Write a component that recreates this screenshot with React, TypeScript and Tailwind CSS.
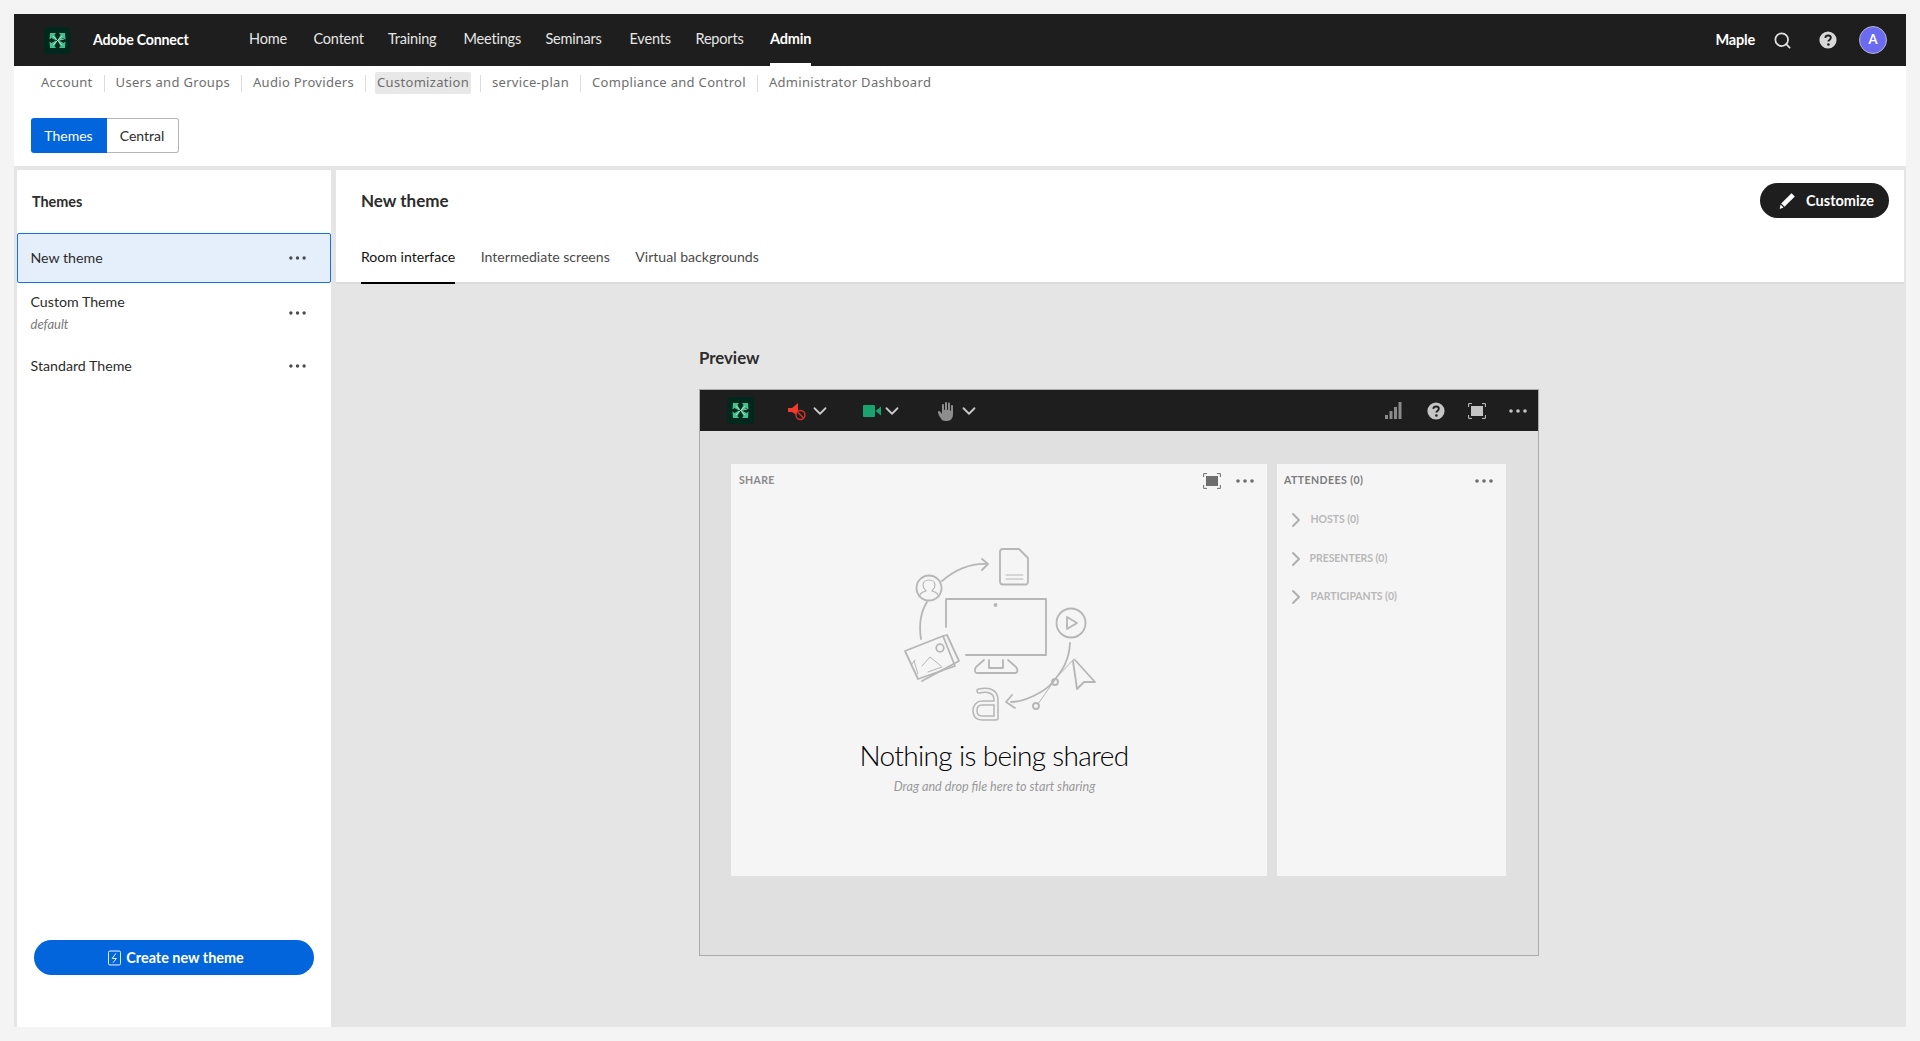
import { Search, ChevronDown, ChevronRight } from 'lucide-react'

const mainNav = [
  { label: 'Home', w: 'w-[64.5px]' },
  { label: 'Content', w: 'w-[74.5px]' },
  { label: 'Training', w: 'w-[75.5px]' },
  { label: 'Meetings', w: 'w-[82px]' },
  { label: 'Seminars', w: 'w-[84px]' },
  { label: 'Events', w: 'w-[66px]' },
  { label: 'Reports', w: 'w-[74.5px]' },
]

const subNav = ['Account', 'Users and Groups', 'Audio Providers', 'Customization', 'service-plan', 'Compliance and Control', 'Administrator Dashboard']

function Dots({ className }: { className: string }) {
  return (
    <svg viewBox="0 0 18 4" className={className} fill="currentColor">
      <circle cx="2" cy="2" r="1.8" />
      <circle cx="9" cy="2" r="1.8" />
      <circle cx="16" cy="2" r="1.8" />
    </svg>
  )
}

function Logo() {
  return (
    <svg viewBox="0 0 27 27" className="w-[27px] h-[27px] shrink-0">
      <rect width="27" height="27" rx="4" fill="#00281c" />
      <g fill="#45c08e">
        <path d="M6 6h6l-1.500 2 2.500 4.500-1 1-4.500-2.500-2 1.500z" />
        <path d="M21 6h-6l1.500 2-2.500 4.500 1 1 4.500-2.500 2 1.500z" />
        <path d="M6 21h6l-1.500-2 2.500-4.500-1-1-4.500 2.500-2-1.500z" />
        <path d="M21 21h-6l1.500-2-2.500-4.500 1-1 4.500 2.500 2-1.500z" />
      </g>
      <path d="M9 9l9 9M18 9l-9 9M13.500 13.500l7-1.500" stroke="#b9e6d3" strokeWidth="0.800" />
    </svg>
  )
}

function HelpIcon({ className, mark }: { className: string; mark: string }) {
  return (
    <svg viewBox="0 0 18 18" className={className}>
      <circle cx="9" cy="9" r="8.600" fill="currentColor" />
      <path d="M6.300 6.800c.2-1.500 1.300-2.300 2.800-2.300 1.600 0 2.700.9 2.700 2.200 0 1.100-.6 1.600-1.400 2.200-.7.500-1 .8-1 1.600" fill="none" stroke={mark} strokeWidth="1.900" />
      <circle cx="9.400" cy="13.400" r="1.250" fill={mark} />
    </svg>
  )
}

function FullScreen({ className, fill }: { className: string; fill: string }) {
  return (
    <svg viewBox="0 0 18 16" className={className} fill="none" stroke="currentColor" strokeWidth="1">
      <path d="M.6 4V.6H4M14 .6h3.400V4M17.400 12v3.400H14M4 15.400H.6V12" />
      <rect x="3" y="3" width="12" height="10" fill={fill} stroke="none" />
    </svg>
  )
}

function SideItem({ name, note, selected }: { name: string; note?: string; selected?: boolean }) {
  const box = selected
    ? 'h-[50px] bg-[#e5effb] border-[1.5px] border-[#1473e6] rounded-[2px]'
    : 'border-[1.5px] border-transparent'
  return (
    <div className={`flex items-center justify-between pl-[12.5px] pr-[24px] text-[#2c2c2c] ${box} ${note ? 'h-[60px]' : ''} ${!selected && !note ? 'h-[46px]' : ''}`}>
      <div className="flex flex-col">
        <span className="text-[14.2px] leading-[20px]">{name}</span>
        {note && <span className="text-[13px] leading-[20px] mt-[2px] italic text-[#7a7a7a]">{note}</span>}
      </div>
      <Dots className="w-[17px] h-[4px] text-[#4b4b4b]" />
    </div>
  )
}

function Illustration() {
  return (
    <svg viewBox="0 0 280 200" className="w-[280px] h-[200px] shrink-0" fill="none" stroke="#b6b6b6" strokeWidth="1.800" strokeLinecap="round" strokeLinejoin="round">
      {/* document */}
      <path d="M143 20h16l9 9v24a2.500 2.500 0 0 1-2.500 2.500h-22.500a3 3 0 0 1-3-3v-29.500a3 3 0 0 1 3-3z" />
      <path d="M146 46h17M146 50h17" strokeWidth="1" />
      {/* arrow to the document */}
      <path d="M82 52c14-12 28-18 46-17M122 30l6 5-6 6" />
      {/* person */}
      <circle cx="69" cy="59" r="12.500" />
      <path d="M59 68c1-4 3-4.500 7-6-2-2-3-4-3-6 0-3 2.500-5 6-5s6 2 6 5c0 2-1 4-3 6 4 1.500 6 2 7 6" strokeWidth="1.200" />
      {/* left arc */}
      <path d="M67 73c-7 11-8 24-6 37" />
      {/* pictures */}
      <path d="M45 122l38-15 12 30-37 13z" />
      <path d="M83 107l4-1 12 26-37 20" />
      <path d="M52 135l3-4m-1 1l4 13M62 137l8-9 11 9M68 143l14-5M70 146l12-4" strokeWidth="1" />
      <circle cx="80" cy="119" r="3.800" />
      {/* monitor */}
      <path d="M86 98V70h100v56H106" />
      <circle cx="135.500" cy="76" r="1" fill="#b6b6b6" />
      <path d="M129 131v8h14v-8M124 131l-8 7c-2 3-1 6 1 6h38c3 0 3-3 1-6l-8-7" />
      {/* play */}
      <circle cx="211" cy="94" r="14.500" />
      <path d="M207 88l10 6-10 6z" />
      {/* curve back */}
      <path d="M210 114c-1 20-10 30-17 39-8 10-29 20-42 20M152 166l-6 7 9 6" />
      <circle cx="195" cy="153" r="3" />
      <circle cx="176" cy="177" r="3" />
      <path d="M192 155l-14 20M195 150l19-20" strokeWidth="1" />
      {/* pointer */}
      <path d="M215 131l20 22-11 0-7 7-4-28" />
      {/* a */}
      <g transform="translate(2 0)">
        <path d="M117 162c9-2 17 0 17 9v18h-14c-5 0-7-3-7-7.500s3-7.500 7-7.500h14" strokeWidth="5.500" />
        <path d="M117 162c9-2 17 0 17 9v18h-14c-5 0-7-3-7-7.500s3-7.500 7-7.500h14" strokeWidth="2.500" stroke="#f4f4f4" />
      </g>
    </svg>
  )
}

export default function App() {
  return (
    <div className="w-[1920px] h-[1041px] bg-[#f4f4f4] px-[14px] pt-[14px] pb-[14px] flex flex-col overflow-hidden font-['Lato','Liberation_Sans',sans-serif]">
      {/* top bar */}
      <header className="h-[52px] bg-[#1e1e1e] flex items-center pl-[30px] pr-[19px] text-white shrink-0">
        <Logo />
        <span className="ml-[22px] w-[156px] pb-[1px] text-[14.2px] font-bold tracking-[-0.2px]">Adobe Connect</span>
        <nav className="flex items-center h-full">
          {mainNav.map(item => (
            <span key={item.label} className={`${item.w} pb-[2px] text-[14.5px] text-[#e6e6e6] tracking-[-0.2px]`}>{item.label}</span>
          ))}
          <span className="h-full w-[41px] flex items-center border-b-[3px] border-white text-[14.5px] font-bold tracking-[-0.2px]">Admin</span>
        </nav>
        <div className="ml-auto flex items-center">
          <span className="text-[14.5px] font-bold tracking-[-0.2px]">Maple</span>
          <Search className="ml-[18px] w-[19px] h-[19px] text-[#e0e0e0]" strokeWidth={2.200} />
          <HelpIcon className="ml-[27px] w-[18px] h-[18px] text-[#d8d8d8]" mark="#1e1e1e" />
          <div className="ml-[22px] w-[28px] h-[28px] rounded-full bg-[#6b6bf2] border border-[#b5b5c8] flex items-center justify-center text-[13px] font-bold">A</div>
        </div>
      </header>

      {/* sub nav and toggle */}
      <div className="h-[100px] bg-white shrink-0 pl-[16.500px]">
        <div className="flex items-center pt-[6px] pl-[10.500px] h-[28px] text-[13px] text-[#6e6e6e] font-['Noto_Sans',sans-serif] tracking-[0.31px]">
          {subNav.map((label, i) => (
            <div key={label} className="flex items-center">
              {i > 0 && <span className="w-px h-[17px] bg-[#dcdcdc] mx-[11px]" />}
              <span className={label === 'Customization' ? 'bg-[#e8e8e8] px-[2px] py-[1px] rounded-[2px] -mx-[2px]' : ''}>{label}</span>
            </div>
          ))}
        </div>
        <div className="mt-[24px] h-[35px] w-[148px] flex text-[14px]">
          <span className="w-[76px] bg-[#0265dc] text-white rounded-l-[3px] flex items-center justify-center">Themes</span>
          <span className="flex-1 border border-l-0 border-[#b5b5b5] rounded-r-[3px] text-[#2c2c2c] flex items-center justify-center">Central</span>
        </div>
      </div>

      {/* body */}
      <div className="flex-1 flex bg-[#e5e5e5] pt-[4px] pl-[3px] min-h-0">
        <aside className="w-[314px] bg-white flex flex-col shrink-0">
          <h2 className="h-[63px] pl-[15px] pt-[21px] text-[14.4px] font-bold text-[#2c2c2c]">Themes</h2>
          <SideItem name="New theme" selected />
          <SideItem name="Custom Theme" note="default" />
          <SideItem name="Standard Theme" />
          <div className="mt-auto px-[17px] pb-[52px]">
            <button className="w-full h-[35px] rounded-full bg-[#0265dc] text-white text-[14.4px] font-bold flex items-center justify-center gap-[5px]">
              <svg viewBox="0 0 14 16" className="w-[13px] h-[16px] ml-[4px]" fill="none" stroke="currentColor" strokeWidth="1">
                <rect x="0.500" y="0.500" width="13" height="15" rx="1.500" />
                <path d="M8.500 3L4.500 8.500H9L5.500 13" />
              </svg>
              Create new theme
            </button>
          </div>
        </aside>

        <main className="flex-1 ml-[5px] flex flex-col min-w-0">
          <div className="h-[114px] bg-white border-b-2 border-[#dcdcdc] mr-[2px] pl-[25px] pr-[15px] flex flex-col shrink-0">
            <div className="flex items-center justify-between pt-[13px]">
              <h1 className="text-[17px] font-bold text-[#2c2c2c]">New theme</h1>
              <button className="h-[35px] w-[129px] rounded-full bg-[#1e1e1e] text-white text-[14.5px] font-bold flex items-center justify-center gap-[10px] pl-[3px]">
                <svg viewBox="0 0 18 18" className="w-[18px] h-[18px]" fill="currentColor">
                  <path d="M13.500 1.200l3.300 3.300L6.500 14.800l-3.300-3.300z" />
                  <path d="M2.500 12.500l3 3-3.800 1.500z" />
                </svg>
                Customize
              </button>
            </div>
            <div className="flex mt-auto h-[50px] gap-[25.500px] text-[14.1px] -mb-[2px]">
              <span className="h-full border-y-2 border-t-transparent border-b-black pb-[4px] flex items-center text-[#111]">Room interface</span>
              <span className="h-full border-y-2 border-transparent pb-[4px] flex items-center text-[#4b4b4b]">Intermediate screens</span>
              <span className="h-full border-y-2 border-transparent pb-[4px] flex items-center text-[#4b4b4b]">Virtual backgrounds</span>
            </div>
          </div>

          <div className="flex-1 pl-[363px] pt-[64px]">
            <h3 className="text-[16.800px] font-bold text-[#2c2c2c] leading-[20px]">Preview</h3>
            <section className="mt-[21px] w-[840px] h-[567px] border border-[#ababab] bg-[#e0e0e0] flex flex-col">
              <div className="h-[41px] bg-[#1e1e1e] flex items-center pl-[27px] pr-[11px] shrink-0">
                <Logo />
                <svg viewBox="0 0 20 20" className="ml-[33px] w-[20px] h-[20px]">
                  <path d="M1 7h4l6-5v13l-6-4H1z" fill="#ef3b2d" />
                  <circle cx="13.500" cy="14" r="4.500" fill="#1e1e1e" stroke="#d7342a" strokeWidth="1.400" />
                  <path d="M10.500 11l6 6" stroke="#d7342a" strokeWidth="1.400" />
                </svg>
                <ChevronDown className="ml-[2px] w-[22px] h-[22px] text-[#c8c8c8]" strokeWidth={2} />
                <svg viewBox="0 0 18 12" className="ml-[32px] w-[18px] h-[12px]" fill="#1aa36f">
                  <rect width="12" height="12" rx="1" />
                  <path d="M12.500 6L18 1.500v9z" />
                </svg>
                <ChevronDown className="w-[22px] h-[22px] text-[#c8c8c8]" strokeWidth={2} />
                <svg viewBox="0 0 20 20" className="ml-[34.500px] w-[20px] h-[20px]" fill="#8d8d8d">
                  <path d="M4 19c-1-2-4-5-4-8 0-1 1.500-1.500 2.500 0L4 13V4c0-1.500 2-1.500 2 0v5l1-.2V2c0-1.500 2-1.500 2 0v6.800l1 .2V2.500c0-1.500 2-1.500 2 0v7l1 .2V5c0-1.500 2-1.500 2 0v8c0 4-2 7-6 7-2 0-4-.200-5-1z" />
                </svg>
                <ChevronDown className="w-[22px] h-[22px] text-[#c8c8c8]" strokeWidth={2} />
                <div className="ml-auto flex items-center">
                  <svg viewBox="0 0 17 17" className="w-[17px] h-[17px]" fill="#8a8a8a">
                    <rect x="0" y="13" width="3" height="4" />
                    <rect x="4.500" y="9" width="3" height="8" />
                    <rect x="9" y="5" width="3" height="12" />
                    <rect x="13.500" y="0" width="3" height="17" />
                  </svg>
                  <HelpIcon className="ml-[25px] w-[18px] h-[18px] text-[#c4c4c4]" mark="#1e1e1e" />
                  <FullScreen className="ml-[23px] w-[18px] h-[16px] text-[#c4c4c4]" fill="#c4c4c4" />
                  <Dots className="ml-[23px] w-[18px] h-[4px] text-[#c4c4c4]" />
                </div>
              </div>

              <div className="flex pl-[31px] pt-[33px] gap-[10px]">
                <div className="w-[536px] h-[412px] bg-[#f5f5f5] flex flex-col items-center">
                  <div className="self-stretch h-[34px] flex items-center pl-[8px] pr-[13px] text-[10.500px] font-bold text-[#8a8a8a] tracking-[0.35px]">
                    <span>SHARE</span>
                    <FullScreen className="ml-auto w-[18px] h-[16px] text-[#6e6e6e]" fill="#6e6e6e" />
                    <Dots className="ml-[15px] w-[18px] h-[4px] text-[#6e6e6e]" />
                  </div>
                  <div className="mt-[31px] ml-[2px]"><Illustration /></div>
                  <div className="-ml-[10px] mt-[8px] text-[28px] leading-[36px] font-light text-black tracking-[-0.65px] whitespace-nowrap">Nothing is being shared</div>
                  <div className="-ml-[9px] mt-[6px] text-[12.600px] leading-[16px] italic text-[#999]">Drag and drop file here to start sharing</div>
                </div>
                <div className="w-[229px] h-[412px] bg-[#f5f5f5]">
                  <div className="h-[34px] flex items-center pl-[7px] pr-[13px] text-[10.500px] font-bold text-[#7c7c7c] tracking-[0.45px]">
                    <span>ATTENDEES (0)</span>
                    <Dots className="ml-auto w-[18px] h-[4px] text-[#6e6e6e]" />
                  </div>
                  <div className="pl-[7px] text-[10.500px] font-bold text-[#b8b8b8] tracking-[-0.05px]">
                    <div className="h-[39px] mt-[2.500px] flex items-center gap-[2.500px]"><ChevronRight className="w-[24px] h-[24px] text-[#b0b0b0]" strokeWidth={2} />HOSTS (0)</div>
                    <div className="h-[39px] flex items-center gap-[1.500px]"><ChevronRight className="w-[24px] h-[24px] text-[#b0b0b0]" strokeWidth={2} />PRESENTERS (0)</div>
                    <div className="h-[37px] flex items-center gap-[2.500px]"><ChevronRight className="w-[24px] h-[24px] text-[#b0b0b0]" strokeWidth={2} />PARTICIPANTS (0)</div>
                  </div>
                </div>
              </div>
            </section>
          </div>
        </main>
      </div>
    </div>
  )
}
